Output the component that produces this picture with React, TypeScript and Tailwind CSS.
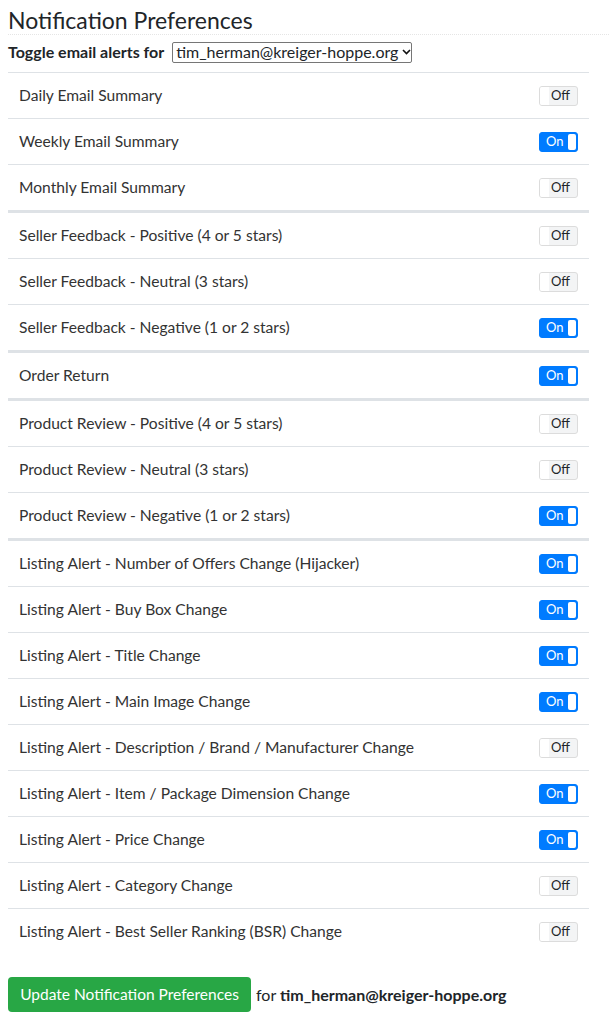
import React from "react";

type Row = { label: string; on: boolean };

const groups: Row[][] = [
  [
    { label: "Daily Email Summary", on: false },
    { label: "Weekly Email Summary", on: true },
    { label: "Monthly Email Summary", on: false },
  ],
  [
    { label: "Seller Feedback - Positive (4 or 5 stars)", on: false },
    { label: "Seller Feedback - Neutral (3 stars)", on: false },
    { label: "Seller Feedback - Negative (1 or 2 stars)", on: true },
  ],
  [{ label: "Order Return", on: true }],
  [
    { label: "Product Review - Positive (4 or 5 stars)", on: false },
    { label: "Product Review - Neutral (3 stars)", on: false },
    { label: "Product Review - Negative (1 or 2 stars)", on: true },
  ],
  [
    { label: "Listing Alert - Number of Offers Change (Hijacker)", on: true },
    { label: "Listing Alert - Buy Box Change", on: true },
    { label: "Listing Alert - Title Change", on: true },
    { label: "Listing Alert - Main Image Change", on: true },
    { label: "Listing Alert - Description / Brand / Manufacturer Change", on: false },
    { label: "Listing Alert - Item / Package Dimension Change", on: true },
    { label: "Listing Alert - Price Change", on: true },
    { label: "Listing Alert - Category Change", on: false },
    { label: "Listing Alert - Best Seller Ranking (BSR) Change", on: false },
  ],
];

function Toggle({ on }: { on: boolean }) {
  if (on) {
    return (
      <div className="relative w-[39px] h-[20px] rounded-[3px] bg-[#007bff] border border-[#007bff] flex items-center">
        <span className="pl-[6px] text-[13px] leading-none text-white">On</span>
        <span className="absolute right-[1px] top-[1px] bottom-[1px] w-[8px] rounded-[2px] bg-white" />
      </div>
    );
  }
  return (
    <div className="relative w-[39px] h-[20px] rounded-[3px] bg-[#f3f4f5] border border-[#dcdcdc] flex items-center justify-end">
      <span className="absolute left-0 top-0 bottom-0 w-[9px] rounded-l-[2px] bg-white" />
      <span className="pr-[7px] text-[13px] leading-none text-[#212529]">Off</span>
    </div>
  );
}

export default function App() {
  return (
    <div
      className="bg-white text-[#212529] min-h-[1024px] pl-2"
      style={{ fontFamily: "Lato, 'Open Sans', sans-serif" }}
    >
      <h1 className="pt-[6px] text-[23px] leading-[28px] font-normal text-[#212529] pb-0 border-b border-dotted border-[#e5e5e5]">
        Notification Preferences
      </h1>
      <div className="mt-[6px] flex items-center h-[22px]">
        <span className="font-bold text-[16px]">Toggle email alerts for</span>
        <div className="ml-[8px] w-[240px] h-[21px] border border-[#767676] rounded-[2px] flex items-center pl-[3px] pr-[4px] justify-between">
          <span className="text-[16px] leading-none whitespace-nowrap">tim_herman@kreiger-hoppe.org</span>
          <svg width="9" height="6" viewBox="0 0 9 6" className="ml-1 shrink-0">
            <path d="M1 1l3.5 3.5L8 1" stroke="#111" strokeWidth="1.6" fill="none" />
          </svg>
        </div>
      </div>
      <div className="mt-[9px] w-[581px]">
        {groups.map((g, gi) => (
          <div key={gi} className={gi === 0 ? "border-t border-[#dee2e6]" : "border-t-[3px] border-[#dee2e6]"}>
            {g.map((r, ri) => (
              <div
                key={ri}
                className={
                  "flex items-center justify-between pl-[11px] pr-[11px] " +
                  (ri === 0 ? "h-[45px]" : "border-t border-[#dee2e6] h-[46px]")
                }
              >
                <span className="text-[15.6px] text-[#333]">{r.label}</span>
                <Toggle on={r.on} />
              </div>
            ))}
          </div>
        ))}
      </div>
      <div className="mt-[23px] flex items-center">
        <button className="h-[35px] w-[243px] rounded-[4px] bg-[#28a745] text-white text-[15.5px] flex items-center justify-center">
          Update Notification Preferences
        </button>
        <span className="ml-[5px] text-[16px]">
          for <b>tim_herman@kreiger-hoppe.org</b>
        </span>
      </div>
    </div>
  );
}
